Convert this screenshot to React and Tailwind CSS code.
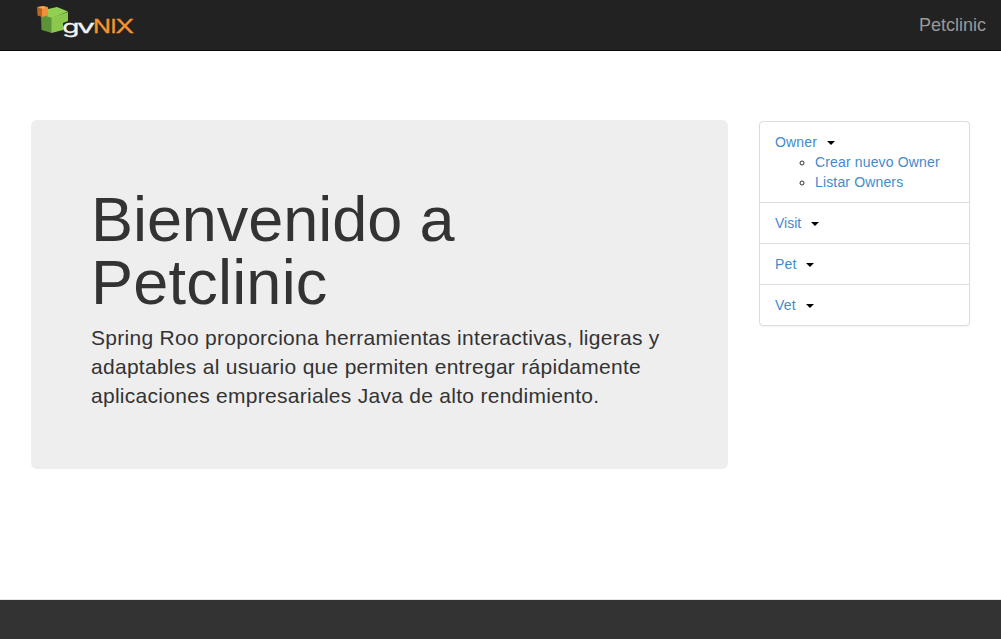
const links = 'text-[#428bca] no-underline'

function Logo() {
  return (
    <svg width="100" height="34" viewBox="0 0 100 34" role="img" aria-label="gvNIX">
      <path d="M6 12 L13 10 L17 14 V29 L6.500 26 Z" fill="#5c9238" />
      <path d="M16.500 13.500 L33 8 V17 L28 19 V26 L16.500 29 Z" fill="#8cc84b" />
      <path d="M13 5 L22 3 L33 7.500 L17 14 L12 12.500 L13 11 Z" fill="#93cf52" />
      <path d="M2 3 L7 5 V13 L2.500 11.500 Z" fill="#b9651c" />
      <path d="M7 4.500 L13 3 V11.500 L7 13 Z" fill="#f0913a" />
      <path d="M2 3 L8 2 L13 3 L7 5 Z" fill="#ffa74f" />
      <g fontFamily="Inter, 'Liberation Sans', sans-serif" fontSize="18" strokeWidth="0.300">
        <text x="27" y="28.500" fill="#f2f2f2" stroke="#f2f2f2" textLength="17.500" lengthAdjust="spacingAndGlyphs">g</text>
        <text x="42" y="28.500" fill="#f2f2f2" stroke="#f2f2f2" textLength="18" lengthAdjust="spacingAndGlyphs">v</text>
        <g fill="#f7942d" stroke="#f7942d">
          <text x="58" y="28.500" textLength="18" lengthAdjust="spacingAndGlyphs">N</text>
          <text x="75.500" y="28.500" textLength="6" lengthAdjust="spacingAndGlyphs">I</text>
          <text x="80.500" y="28.500" textLength="18.500" lengthAdjust="spacingAndGlyphs">X</text>
        </g>
      </g>
    </svg>
  )
}

function Caret() {
  return (
    <span className="ml-[10px] inline-block h-0 w-0 border-x-4 border-t-4 border-x-transparent border-t-black align-middle" />
  )
}

function MenuItem({ label, tracking = 'tracking-[0.15px]', children }) {
  return (
    <li className="border-t border-[#ddd] px-[15px] py-[10px] first:border-t-0">
      <div className="h-5">
        <a href="#" className={`${links} ${tracking}`}>{label}</a>
        <Caret />
      </div>
      {children}
    </li>
  )
}

export default function App() {
  return (
    <div className="flex h-[639px] w-full flex-col overflow-hidden bg-white font-['Liberation_Sans',Arial,sans-serif] text-[14px] leading-[20px] text-[#333]">
      <header className="flex h-[51px] shrink-0 justify-between border-b border-[#080808] bg-[#222] pr-[15px] pl-[35px]">
        <a href="#" className="pt-[4px]"><Logo /></a>
        <a href="#" className="pt-[15px] text-[18px] leading-[20px] text-[#999]">Petclinic</a>
      </header>
      <main className="flex grow items-start gap-[31px] pt-[69px] pr-[31px] pl-[31px]">
        <section className="h-[349px] w-[697px] rounded-[6px] bg-[#eee] px-[60px] pt-[68px]">
          <h1 className="text-[63px] leading-[63px] font-medium">
            <span className="tracking-[-0.06px]">Bienvenido a</span>{' '}
            <span className="tracking-[0.22px]">Petclinic</span>
          </h1>
          <p className="mt-[9px] text-[21px] leading-[29px] tracking-[0.28px]">
            Spring Roo proporciona herramientas interactivas, ligeras y adaptables al usuario que permiten entregar rápidamente aplicaciones empresariales Java de alto rendimiento.
          </p>
        </section>
        <ul className="mt-px w-[211px] rounded-[4px] border border-[#ddd] bg-white shadow-[0_1px_2px_rgba(0,0,0,0.05)]">
          <MenuItem label="Owner">
            <ul className="list-[circle] pl-[40px] tracking-[0.15px]">
              <li><a href="#" className={links}>Crear nuevo Owner</a></li>
              <li><a href="#" className={links}>Listar Owners</a></li>
            </ul>
          </MenuItem>
          <MenuItem label="Visit" tracking="tracking-normal" />
          <MenuItem label="Pet" />
          <MenuItem label="Vet" />
        </ul>
      </main>
      <footer className="h-[40px] shrink-0 border-t border-[#e5e5e5] bg-[#333]" />
    </div>
  )
}
